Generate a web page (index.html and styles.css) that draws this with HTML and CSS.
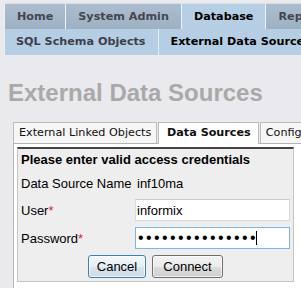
FILE: index.html
```html
<!DOCTYPE html>
<html lang="en">
<head>
    <meta charset="UTF-8">
    <title>External Data Sources</title>
    <link rel="stylesheet" href="styles.css">
</head>
<body>
    <div class="page">
        <div class="nav">
            <ul class="nav-main">
                <li>Home</li>
                <li>System Admin</li>
                <li class="active">Database</li>
                <li>Reports</li>
            </ul>
            <ul class="nav-sub">
                <li>SQL Schema Objects</li>
                <li class="active">External Data Sources</li>
            </ul>
        </div>

        <h1 class="page-title">External Data Sources</h1>

        <div class="tabview">
            <ul class="tab-list">
                <li class="tab">External Linked Objects</li>
                <li class="tab active">Data Sources</li>
                <li class="tab">Configuration</li>
            </ul>
            <div class="tab-body">
                <form class="cred-box">
                    <div class="cred-title">Please enter valid access credentials</div>
                    <div class="field field-info">
                        <span class="field-label">Data Source Name</span>
                        <span class="field-value">inf10ma</span>
                    </div>
                    <div class="field field-user">
                        <label class="field-label" for="user">User<span class="req">*</span></label>
                        <input class="text-input" id="user" type="text" value="informix">
                    </div>
                    <div class="field field-pass">
                        <label class="field-label" for="pass">Password<span class="req">*</span></label>
                        <div class="pass-wrap">
                            <input class="text-input focused" id="pass" type="password" value="informix1234567">
                            <span class="caret"></span>
                        </div>
                    </div>
                    <div class="actions">
                        <button type="button" class="btn btn-default btn-cancel">Cancel</button>
                        <button type="button" class="btn btn-connect">Connect</button>
                    </div>
                </form>
            </div>
        </div>
    </div>
</body>
</html>
```

FILE: styles.css
```css
* {
    box-sizing: border-box;
}

body {
    margin: 0;
    background-color: #e9e9ee;
}

.page {
    width: 301px;
    height: 288px;
    overflow: hidden;
}

/* top navigation */
.nav {
    margin: 3px 0 0 4px;
    font-family: 'DejaVu Sans', Verdana, sans-serif;
    font-size: 11.2px;
    font-weight: bold;
    white-space: nowrap;
}

.nav ul {
    list-style: none;
    margin: 0;
    padding: 0;
    display: flex;
}

.nav-main li {
    flex: none;
    height: 26px;
    line-height: 26px;
    padding: 0 12px;
    color: #454550;
    background: linear-gradient(#abbdce, #9db1c4);
    border-top: 1px solid #d7e0e9;
    border-left: 1px solid #eef2f6;
}

.nav-main li.active {
    color: #000;
    background: #b7cfe5;
}

.nav-sub {
    background: #b6cee4;
}

.nav-sub li {
    flex: none;
    height: 26px;
    line-height: 26px;
    padding: 0 12px 0 11px;
    color: #3e3e4c;
    border-left: 1px solid #e6eef6;
}

.nav-sub li.active {
    color: #000;
    padding-left: 12px;
}

.page-title {
    margin: 24px 0 15px 8px;
    font-family: 'Liberation Sans', Arial, sans-serif;
    font-size: 24px;
    line-height: 28px;
    font-weight: bold;
    color: #a9a9a9;
    white-space: nowrap;
}

/* tab view */
.tabview {
    margin-left: 13px;
}

.tab-list {
    list-style: none;
    margin: 0;
    padding: 0;
    display: flex;
    align-items: flex-end;
    border-bottom: 1px solid #b4b4b4;
    white-space: nowrap;
    font-family: 'DejaVu Sans', Verdana, sans-serif;
    font-size: 11.2px;
}

.tab {
    flex: none;
    height: 21px;
    line-height: 20px;
    padding: 0 5px;
    margin-right: 1px;
    color: #111;
    background: #f6f6f6;
    border: 1px solid #bcbcbc;
    border-bottom: none;
}

.tab:first-child {
    width: 144px;
}

.tab.active {
    height: 22px;
    margin-bottom: -1px;
    padding: 0 7px 0 8px;
    font-weight: bold;
    background: #fff;
}

.tab-body {
    background: #fff;
    border-left: 1px solid #b4b4b4;
    padding: 3px 0 8px 3px;
}

.cred-box {
    width: 277px;
    margin: 0;
    padding: 1px 3px 3px 3px;
    background: #eeeeee;
    border: 1px solid #c6c6c6;
    border-top: 2px solid #444;
    font-family: 'Liberation Sans', Arial, sans-serif;
    font-size: 13px;
    color: #000;
}

.cred-title {
    font-weight: bold;
    line-height: 20px;
    white-space: nowrap;
}

.field {
    display: grid;
    grid-template-columns: 114px 155px;
    align-items: center;
}

.field-info {
    margin-top: 4px;
    line-height: 20px;
}

.field-value {
    padding-left: 2px;
}

.field-user {
    margin-top: 5px;
}

.field-pass {
    margin-top: 6px;
}

.req {
    color: #e0202a;
}

.text-input {
    width: 155px;
    height: 22px;
    margin: 0;
    padding: 0 1px;
    font-family: 'Liberation Sans', Arial, sans-serif;
    font-size: 13px;
    color: #000;
    background: #fff;
    border: 1px solid #d3dde6;
    border-top-color: #c2ccd6;
    outline: none;
}

.pass-wrap {
    position: relative;
}

.text-input.focused {
    display: block;
    border-color: #7db6e6;
    font-size: 16px;
    letter-spacing: 2.4px;
    padding: 0 2px;
}

.caret {
    position: absolute;
    left: 121px;
    top: 4px;
    width: 1px;
    height: 14px;
    background: #000;
}

.actions {
    margin-top: 6px;
    display: flex;
    justify-content: center;
    gap: 6px;
}

.btn {
    height: 23px;
    padding: 0;
    font-family: 'Liberation Sans', Arial, sans-serif;
    font-size: 13px;
    color: #000;
    border: 1px solid #707070;
    border-radius: 3px;
    background: linear-gradient(#f3f3f3 0%, #ebebeb 50%, #dddddd 51%, #cfcfcf 100%);
    box-shadow: inset 0 0 0 1px rgba(255, 255, 255, 0.7);
}

.btn-cancel {
    width: 58px;
    border-color: #3c7fb1;
    background: linear-gradient(#f2f7fa 0%, #e7eff4 50%, #d9e4ec 51%, #cfdce6 100%);
}

.btn-connect {
    width: 71px;
}
```
